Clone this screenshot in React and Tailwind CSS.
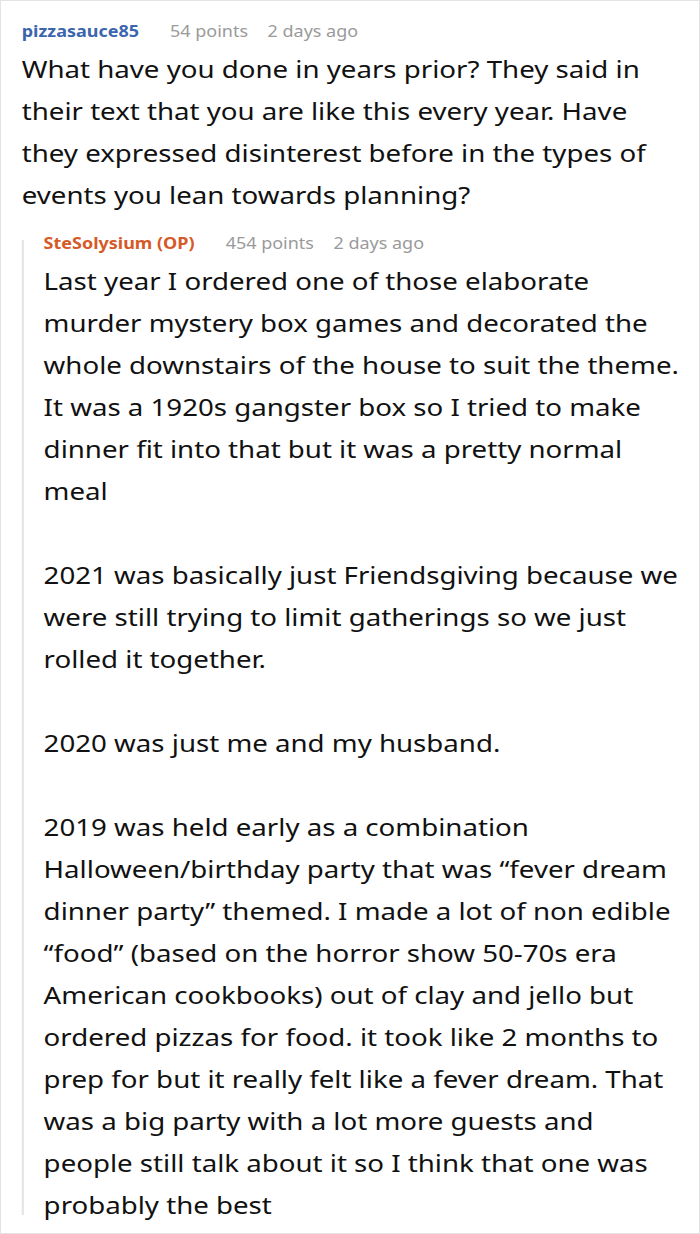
import React from 'react';

// the reference is horizontally stretched ~1.152x, so layout in a narrower box and scale on x
const Header = ({ name, color, points, time }) => (
  <div className="flex items-baseline text-[15.6px] leading-[24px]">
    <span className={`font-bold ${color}`}>{name}</span>
    <span className="ml-[27px] text-[#9a9a9a]">{points}</span>
    <span className="ml-[17px] text-[#9a9a9a]">{time}</span>
  </div>
);

const App = () => {
  const reply = [
    'Last year I ordered one of those elaborate murder mystery box games and decorated the whole downstairs of the house to suit the theme. It was a 1920s gangster box so I tried to make dinner fit into that but it was a pretty normal meal',
    '2021 was basically just Friendsgiving because we were still trying to limit gatherings so we just rolled it together.',
    '2020 was just me and my husband.',
    '2019 was held early as a combination Halloween/birthday party that was \u201cfever dream dinner party\u201d themed. I made a lot of non edible \u201cfood\u201d (based on the horror show 50-70s era American cookbooks) out of clay and jello but ordered pizzas for food. it took like 2 months to prep for but it really felt like a fever dream. That was a big party with a lot more guests and people still talk about it so I think that one was probably the best',
  ];

  return (
    <div className="w-[700px] h-[1234px] bg-white border border-[#e3e3e3] overflow-hidden font-['Noto_Sans',sans-serif] text-[#111]">
      <div className="w-[607px] origin-top-left scale-x-[1.152] pl-[18px] pr-[13px] pt-[18px]">
        <Header name="pizzasauce85" color="text-[#3b66ad]" points="54 points" time="2 days ago" />
        <p className="mt-[5px] text-[24px] leading-[42px]">
          What have you done in years prior? They said in their text that you are like this every year. Have they expressed disinterest before in the types of events you lean towards planning?
        </p>

        <div className="mt-[15px] flex">
          <div className="w-[2px] bg-[#e6e6e6] mt-[9px] mb-[11px] shrink-0" />
          <div className="pl-[17px]">
            <Header name="SteSolysium (OP)" color="text-[#d55a27]" points="454 points" time="2 days ago" />
            <div className="mt-[5px] text-[24px] leading-[42px] flex flex-col gap-[42px]">
              {reply.map((t, i) => (
                <p key={i}>{t}</p>
              ))}
            </div>
          </div>
        </div>
      </div>
    </div>
  );
};

export default App;
